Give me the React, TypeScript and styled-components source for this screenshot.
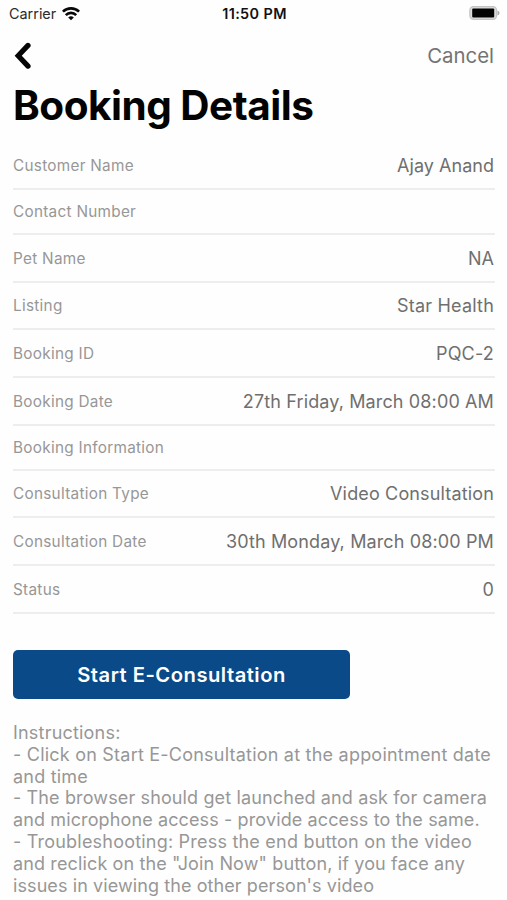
import React from "react";
import styled, { createGlobalStyle } from "styled-components";

const GlobalStyle = createGlobalStyle`
  * { box-sizing: border-box; }
  body { margin: 0; background: #fefefe; }
`;

const Screen = styled.main`
  display: flex;
  flex-direction: column;
  width: 507px;
  height: 900px;
  overflow: hidden;
  background: #fefefe;
  font-family: Inter, "Liberation Sans", sans-serif;
  font-kerning: normal;
`;

const StatusBar = styled.header`
  display: grid;
  grid-template-columns: 1fr auto 1fr;
  align-items: center;
  height: 27px;
  padding: 0 7px 0 9px;
  color: #111;
  font-size: 14.4px;
`;

const Carrier = styled.div`
  display: flex;
  align-items: center;
  gap: 5.5px;
  color: #2b2b2b;
`;

const Clock = styled.time`
  font-weight: 600;
  letter-spacing: 0.4px;
`;

const Battery = styled.div`
  display: flex;
  justify-content: flex-end;
  padding-bottom: 1px;
`;

const NavBar = styled.nav`
  display: flex;
  align-items: center;
  justify-content: space-between;
  height: 57px;
  padding: 0 13px 0 14px;
`;

const BackButton = styled.button`
  display: flex;
  padding: 0;
  border: 0;
  background: none;
`;

const CancelButton = styled.button`
  padding: 0;
  border: 0;
  background: none;
  color: #747474;
  font: 400 20.4px/28px Inter, "Liberation Sans", sans-serif;
`;

const Title = styled.h1`
  margin: 0;
  padding-left: 13px;
  height: 59px;
  color: #030303;
  font-size: 40.5px;
  font-weight: 700;
  line-height: 44px;
  letter-spacing: -0.5px;
  white-space: nowrap;
`;

const Details = styled.dl`
  display: flex;
  flex-direction: column;
  margin: 0 12px 0 13px;
`;

const Row = styled.div<{ $height: number }>`
  display: flex;
  align-items: center;
  justify-content: space-between;
  height: ${(p) => p.$height}px;
  padding-top: 0.6px;
  border-bottom: 2px solid #ededed;
  white-space: nowrap;
`;

const Label = styled.dt`
  color: #979797;
  font-size: 15.3px;
  letter-spacing: 0.29px;
`;

const Value = styled.dd<{ $tracking?: number }>`
  margin: 0 1px 0 0;
  color: #6f6f6f;
  font-size: 18px;
  letter-spacing: ${(p) => p.$tracking ?? 0.2}px;
`;

const StartButton = styled.button`
  width: 337px;
  height: 49px;
  margin: 36px 0 0 13px;
  padding: 1px 0 0;
  border: 0;
  border-radius: 5px;
  background: #0a4a88;
  color: #fff;
  font: 600 20.2px/48px Inter, "Liberation Sans", sans-serif;
  letter-spacing: 0.5px;
`;

const Instructions = styled.section`
  margin: 23.4px 0 0 13px;
  color: #979797;
  font-size: 18px;
  line-height: 21.85px;
  white-space: nowrap;
`;

const Line = styled.div<{ $tracking: number }>`
  letter-spacing: ${(p) => p.$tracking}px;
`;

const rows = [
  { label: "Customer Name", value: "Ajay Anand", height: 47, tracking: 0.03 },
  { label: "Contact Number", value: "", height: 45 },
  { label: "Pet Name", value: "NA", height: 47.5, tracking: 0 },
  { label: "Listing", value: "Star Health", height: 47.75 },
  { label: "Booking ID", value: "PQC-2", height: 47.75 },
  { label: "Booking Date", value: "27th Friday, March 08:00 AM", height: 47.5, tracking: 0.13 },
  { label: "Booking Information", value: "", height: 45 },
  { label: "Consultation Type", value: "Video Consultation", height: 47.5, tracking: 0.15 },
  { label: "Consultation Date", value: "30th Monday, March 08:00 PM", height: 48, tracking: 0.13 },
  { label: "Status", value: "0", height: 47.5 },
];

const instructions = [
  { text: "Instructions:", tracking: 0.2 },
  { text: "- Click on Start E-Consultation at the appointment date", tracking: 0.22 },
  { text: "and time", tracking: 0.2 },
  { text: "- The browser should get launched and ask for camera", tracking: 0.13 },
  { text: "and microphone access - provide access to the same.", tracking: 0.12 },
  { text: "- Troubleshooting: Press the end button on the video", tracking: 0.21 },
  { text: "and reclick on the \"Join Now\" button, if you face any", tracking: 0.13 },
  { text: "issues in viewing the other person's video", tracking: 0.09 },
];

const WifiIcon = () => (
  <svg width="18" height="14" viewBox="0 0 18 14" fill="none" stroke="#080808" strokeWidth="2.6">
    <path d="M0.9 4.7a11.5 11.5 0 0 1 16.2 0" />
    <path d="M3.8 8.1a7.2 7.2 0 0 1 10.4 0" />
    <path d="M9 13.3 6.2 10.5a4 4 0 0 1 5.6 0Z" fill="#080808" stroke="none" />
  </svg>
);

const BatteryIcon = () => (
  <svg width="31" height="14" viewBox="0 0 31 14">
    <rect x="0.9" y="0.7" width="26.6" height="12.6" rx="3.5" fill="#ddd" stroke="#c4c4c4" strokeWidth="1.3" />
    <rect x="3.2" y="2.6" width="22" height="8.8" rx="1" fill="#030303" />
    <path d="M28.5 4.5v5q2-.7 2-2.5t-2-2.5Z" fill="#aaa" />
  </svg>
);

const ChevronIcon = () => (
  <svg width="18" height="28" viewBox="0 0 18 28" fill="none" stroke="#050505" strokeWidth="5.2" strokeLinecap="round">
    <path d="M14 3.4 4.2 13.7 14 24.1" />
  </svg>
);

export default function App() {
  return (
    <Screen>
      <GlobalStyle />
      <StatusBar>
        <Carrier>
          Carrier
          <WifiIcon />
        </Carrier>
        <Clock>11:50 PM</Clock>
        <Battery>
          <BatteryIcon />
        </Battery>
      </StatusBar>
      <NavBar>
        <BackButton aria-label="Back">
          <ChevronIcon />
        </BackButton>
        <CancelButton>Cancel</CancelButton>
      </NavBar>
      <Title>Booking Details</Title>
      <Details>
        {rows.map((row) => (
          <Row key={row.label} $height={row.height}>
            <Label>{row.label}</Label>
            <Value $tracking={row.tracking}>{row.value}</Value>
          </Row>
        ))}
      </Details>
      <StartButton>Start E-Consultation</StartButton>
      <Instructions>
        {instructions.map((line) => (
          <Line key={line.text} $tracking={line.tracking}>{line.text}</Line>
        ))}
      </Instructions>
    </Screen>
  );
}
